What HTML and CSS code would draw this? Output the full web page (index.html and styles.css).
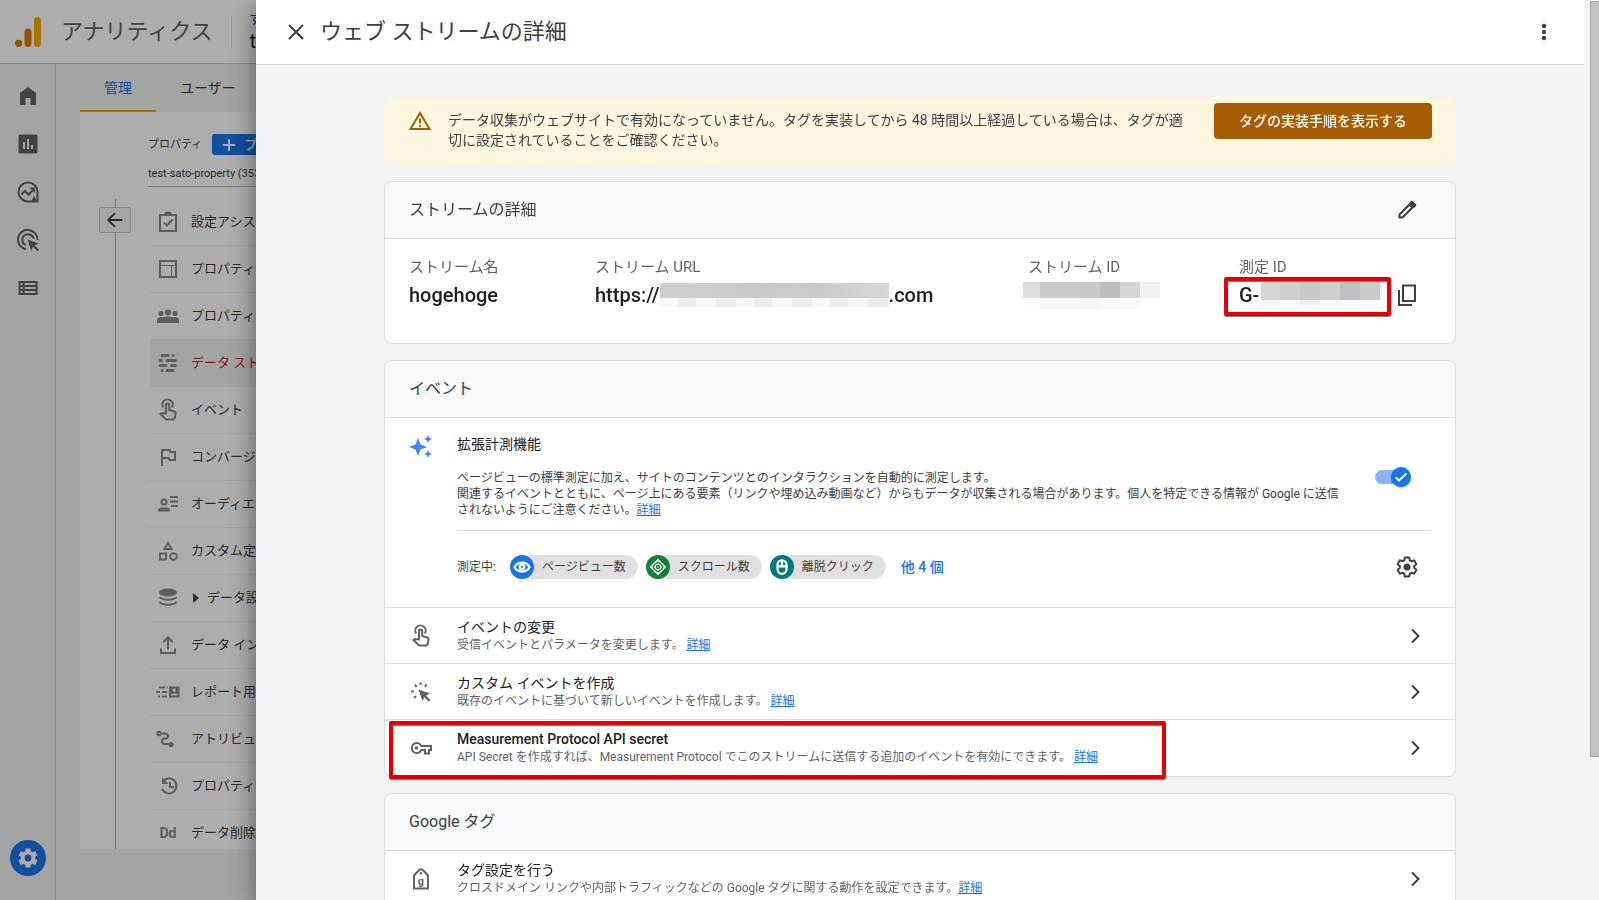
FILE: index.html
```html
<!DOCTYPE html>
<html lang="ja">
<head>
<meta charset="utf-8">
<title>アナリティクス | ウェブ ストリームの詳細</title>
<link rel="stylesheet" href="styles.css">
</head>
<body>
<div class="app">
  <header class="topbar">
    <svg class="logo" viewBox="0 0 26 30" width="26" height="30" aria-hidden="true"><rect x="19" y="0" width="7" height="30" rx="3.5" fill="#f9ab00"/><rect x="9.500" y="11.500" width="7" height="18.500" rx="3.500" fill="#e37400"/><circle cx="3.600" cy="26.300" r="3.600" fill="#e37400"/></svg>
    <span class="product">アナリティクス</span>
    <div class="account"><span class="account-all">す</span><span class="account-name">te</span></div>
  </header>
  <div class="workspace">
    <nav class="rail" aria-label="メイン">
      <a href="#" aria-label="ホーム"><svg viewBox="0 0 24 24"><path d="M12 3 4 9v12h5.500v-7h5v7H20V9z"/></svg></a>
      <a href="#" aria-label="レポート"><svg viewBox="0 0 24 24"><path d="M20 2.500H4c-.8 0-1.500.7-1.500 1.500v16c0 .8.7 1.500 1.500 1.500h16c.8 0 1.500-.7 1.500-1.500V4c0-.8-.7-1.500-1.500-1.500zM9 17H7v-7h2zm4 0h-2V7h2zm4 0h-2v-4h2z"/></svg></a>
      <a href="#" aria-label="探索"><svg viewBox="0 0 24 24"><path class="line" d="M12 2.500a9.500 9.500 0 1 0 0 19h9.500V12A9.500 9.500 0 0 0 12 2.500z"/><path class="line" d="m5.500 14.500 3.500-3.500 3.500 3.500 5-5"/><path d="M13.500 7.500H19V13zM18 16l4 6h-7z"/></svg></a>
      <a href="#" aria-label="広告"><svg viewBox="0 0 24 24"><path class="line" d="M10 21.300A9.800 9.800 0 1 1 21.500 12M9.500 17A5.700 5.700 0 1 1 17.500 10.500"/><path d="m11.500 11.500 11 4-4 1.800 4.500 4.500-1.500 1.500-4.500-4.500-1.800 4z"/></svg></a>
      <a href="#" aria-label="設定"><svg viewBox="0 0 24 24"><path d="M2.500 5h19v14h-19zM4.500 7v2h2V7zm4 0v2h11V7zm-4 4v2h2v-2zm4 0v2h11v-2zm-4 4v2h2v-2zm4 0v2h11v-2z" fill-rule="evenodd"/></svg></a>
      <a href="#" class="admin" aria-label="管理"><svg viewBox="0 0 24 24"><use href="#gear"/><circle cx="12" cy="12" r="3.400" fill="#1a73e8"/></svg></a>
    </nav>
    <main class="admin-page">
      <div class="tabs"><a href="#" class="tab current">管理</a><a href="#" class="tab">ユーザー</a></div>
      <div class="panel">
        <div class="spine"><button class="back" aria-label="戻る"><svg viewBox="0 0 24 24"><path class="line" d="M20 12H5M12 4.500 4.500 12l7.500 7.500"/></svg></button></div>
        <div class="property">
          <div class="property-head"><span>プロパティ</span><button class="create"><svg viewBox="0 0 14 14"><path d="M7 1v12M1 7h12"/></svg>プロ</button></div>
          <div class="property-name">test-sato-property (353</div>
          <ul class="menu">
            <li><svg viewBox="0 0 24 24"><path class="line" d="M4 5h16v16H4zM8 12.500l3 3 5.500-6"/><path d="M8 5a4 3.500 0 0 1 8 0z"/></svg>設定アシス</li>
            <li><svg viewBox="0 0 24 24"><path class="line" d="M4 4h16v16H4z"/><path class="thin" d="M4 8.500h16M15.500 8.500V20"/></svg>プロパティ</li>
            <li><svg viewBox="0 0 24 24"><circle cx="12" cy="8.500" r="3"/><circle cx="5" cy="9.500" r="2.500"/><circle cx="19" cy="9.500" r="2.500"/><path d="M1 19v-3c0-2 2-3 4-3 1 0 2 .3 2.500.6C9 12.700 10.500 12.500 12 12.500s3 .2 4.500 1.100c.5-.3 1.500-.6 2.500-.6 2 0 4 1 4 3v3z"/></svg>プロパティ</li>
            <li class="active"><svg viewBox="0 0 24 24"><path class="dash" d="M6 4.500h6M17 4.500h.2M4 9.500h1.500M11 9.500h8.500M4 14.500h6M15.500 14.500h4M6 19.500h.2M11 19.500h6"/></svg>データ スト</li>
            <li><svg viewBox="0 0 24 24"><use href="#touch"/></svg>イベント</li>
            <li><svg viewBox="0 0 24 24"><path class="line" d="M6 21V5h7.500l.7 2H19v8h-5.500l-.8-2H6"/></svg>コンバージ</li>
            <li><svg viewBox="0 0 24 24"><circle class="line" cx="8" cy="10" r="2.500"/><path class="line" d="M3 18.500c0-3 10-3 10 0z M14 5h8M14 9.500h8M15 14h7"/></svg>オーディエ</li>
            <li><svg viewBox="0 0 24 24"><path class="line" d="m12 4 3.500 6h-7zM4 14.500h6v6H4z"/><circle class="line" cx="17.500" cy="17.500" r="3.300"/></svg>カスタム定</li>
            <li><svg viewBox="0 0 24 24"><ellipse cx="12" cy="6.500" rx="9" ry="4"/><path class="line" d="M3.500 11c2 3.500 15 3.500 17 0M3.500 16c2 3.500 15 3.500 17 0"/></svg><i class="expand"></i>データ設</li>
            <li><svg viewBox="0 0 24 24"><path class="line" d="M5 15.500V20h14v-4.500M12 16V5M7.500 9 12 4.500 16.500 9"/></svg>データ イン</li>
            <li><svg viewBox="0 0 24 24"><path class="line" d="M3 7.500h6M10.500 7.500h1M0 12h4M6 12h5M2 16.500h2M6 16.500h5"/><path fill-rule="evenodd" d="M13 6.500h10.500v11H13zM18.200 8.500a1.700 1.700 0 1 0 .1 0zM15 15.500h6.500c0-3-6.500-3-6.500 0z"/></svg>レポート用</li>
            <li><svg viewBox="0 0 24 24"><circle class="line" cx="3" cy="6.500" r="1.700"/><path class="line" d="M5 6.500h4c4 0 4 5 0 5s-4 5.500 0 5.500h4"/><circle cx="15" cy="17.500" r="2.600"/></svg>アトリビュ</li>
            <li><svg viewBox="0 0 24 24"><path class="line" d="M6.500 8a7.500 7.500 0 1 1-.4 7M14 8v5h4"/><path d="M6 3.500V10h6.500z"/></svg>プロパティ</li>
            <li><b>Dd</b>データ削除</li>
          </ul>
        </div>
      </div>
    </main>
  </div>
</div>

<div class="scrim"></div>

<section class="drawer" aria-label="ウェブ ストリームの詳細">
  <header class="drawer-head">
    <button class="icon-button" aria-label="閉じる"><svg viewBox="0 0 24 24"><path class="line" d="m5 5 14 14M19 5 5 19"/></svg></button>
    <h1>ウェブ ストリームの詳細</h1>
    <button class="icon-button more" aria-label="その他"><svg viewBox="0 0 24 24"><circle cx="12" cy="6" r="2.200"/><circle cx="12" cy="12" r="2.200"/><circle cx="12" cy="18" r="2.200"/></svg></button>
  </header>
  <div class="drawer-body">
    <div class="banner" role="status">
      <svg viewBox="0 0 24 24"><path class="line" d="M12 4 2.500 20h19z"/><path d="M11 9.500h2v5h-2zM11 16h2v2h-2z"/></svg>
      <p>データ収集がウェブサイトで有効になっていません。タグを実装してから 48 時間以上経過している場合は、タグが適切に設定されていることをご確認ください。</p>
      <button>タグの実装手順を表示する</button>
    </div>

    <section class="card">
      <div class="card-head"><h2>ストリームの詳細</h2><button class="icon-button" aria-label="編集"><svg viewBox="0 0 24 24"><path class="line" d="m4.500 16.500 10-10 3 3-10 10h-3z"/><path d="m14 5 1.800-1.800c.6-.6 1.500-.6 2.100 0l2.900 2.900c.6.600.6 1.500 0 2.100L19 10z"/></svg></button></div>
      <dl class="facts">
        <div><dt>ストリーム名</dt><dd>hogehoge</dd></div>
        <div><dt>ストリーム URL</dt><dd>https://<span class="mask mask-url"></span>.com</dd></div>
        <div><dt>ストリーム ID</dt><dd><span class="mask mask-id"></span></dd></div>
        <div class="measure"><dt>測定 ID</dt><dd>G-<span class="mask mask-measure"></span><button class="icon-button" aria-label="コピー"><svg viewBox="0 0 24 24"><path class="line" d="M8 2.500h12v15.500H8zM4 7v15h13"/></svg></button></dd></div>
      </dl>
    </section>

    <section class="card">
      <div class="card-head"><h2>イベント</h2></div>
      <div class="enhanced">
        <svg class="sparkle" viewBox="0 0 24 24"><path d="m9 4 2.600 6.400L18 13l-6.400 2.600L9 22l-2.600-6.400L0 13l6.400-2.600zM19 1l1.200 2.800L23 5l-2.800 1.200L19 9l-1.200-2.800L15 5l2.800-1.200zM19 16l1.200 2.800L23 20l-2.800 1.200L19 24l-1.200-2.800L15 20l2.800-1.200z"/></svg>
        <div class="enhanced-main">
          <div class="enhanced-top">
            <div><h3 id="em">拡張計測機能</h3>
            <p>ページビューの標準測定に加え、サイトのコンテンツとのインタラクションを自動的に測定します。<br>関連するイベントとともに、ページ上にある要素（リンクや埋め込み動画など）からもデータが収集される場合があります。個人を特定できる情報が Google に送信<br>されないようにご注意ください。<a href="#">詳細</a></p></div>
            <label class="switch"><input type="checkbox" checked aria-labelledby="em"><span class="knob"><svg viewBox="0 0 24 24"><path d="m4 12.500 5 5L20 6.500"/></svg></span></label>
          </div>
          <div class="measuring">
            <span>測定中:</span>
            <span class="chip"><i class="blue"><svg viewBox="0 0 24 24"><path d="M2 12c4-8 16-8 20 0-4 8-16 8-20 0z"/><circle cx="12" cy="12" r="3"/></svg></i>ページビュー数</span>
            <span class="chip"><i class="green"><svg viewBox="0 0 24 24"><path d="m12 1 11 11-11 11L1 12z" fill="#fff" stroke="none"/><path class="cut" d="m8 8-2.500 4L8 16M16 8l2.500 4-2.500 4M8.500 8 12 5.500 15.500 8M8.500 16l3.500 2.500 3.500-2.500"/><circle cx="12" cy="12" r="2" class="cut"/></svg></i>スクロール数</span>
            <span class="chip"><i class="teal"><svg viewBox="0 0 24 24"><path d="M6 9a6 6 0 0 1 12 0v6a6 6 0 0 1-12 0zM6 11h12M12 3v8"/></svg></i>離脱クリック</span>
            <a href="#" class="others">他 4 個</a>
            <button class="icon-button" aria-label="設定"><svg viewBox="0 0 24 24"><g class="gear-line"><use href="#gear"/></g><circle cx="12" cy="12" r="3.500"/></svg></button>
          </div>
        </div>
      </div>
      <div class="row"><svg viewBox="0 0 24 24"><use href="#touch"/></svg><div><h3>イベントの変更</h3><p>受信イベントとパラメータを変更します。 <a href="#">詳細</a></p></div><button class="icon-button" aria-label="イベントの変更"><svg viewBox="0 0 24 24"><use href="#chevron"/></svg></button></div>
      <div class="row"><svg viewBox="0 0 24 24"><path class="line" d="M7.500 7 6 4.500M11.500 5V2.500M16 7l1.500-2.500M5 11.500H2M7 16l-2 2"/><path d="m9.500 9.500 11.500 4-4 2 4.500 4.500-1.700 1.700-4.500-4.500-1.800 3.800z"/></svg><div><h3>カスタム イベントを作成</h3><p>既存のイベントに基づいて新しいイベントを作成します。 <a href="#">詳細</a></p></div><button class="icon-button" aria-label="カスタム イベントを作成"><svg viewBox="0 0 24 24"><use href="#chevron"/></svg></button></div>
      <div class="row marked"><svg viewBox="0 0 24 24"><path class="line" d="M12.300 10h9.700v4h-2v3.500h-4V14h-3.700A5 5 0 1 1 12.300 10z"/><circle cx="7.500" cy="12" r="1.800"/></svg><div><h3>Measurement Protocol API secret</h3><p>API Secret を作成すれば、Measurement Protocol でこのストリームに送信する追加のイベントを有効にできます。 <a href="#">詳細</a></p></div><button class="icon-button" aria-label="Measurement Protocol API secret"><svg viewBox="0 0 24 24"><use href="#chevron"/></svg></button></div>
    </section>

    <section class="card">
      <div class="card-head"><h2>Google タグ</h2></div>
      <div class="row"><svg viewBox="0 0 24 24"><path class="line" d="M5 8.500 10.500 2.500h3L19 8.500v13H5z"/><circle cx="12" cy="6.300" r="1.200"/><text x="12" y="17.500" class="tag-letter">g</text></svg><div><h3>タグ設定を行う</h3><p>クロスドメイン リンクや内部トラフィックなどの Google タグに関する動作を設定できます。<a href="#">詳細</a></p></div><button class="icon-button" aria-label="タグ設定を行う"><svg viewBox="0 0 24 24"><use href="#chevron"/></svg></button></div>
    </section>
  </div>
  <div class="scrollbar"></div>
</section>

<svg class="defs" aria-hidden="true"><defs>
  <path id="gear" d="M19.140 12.940c.04-.3.06-.61.06-.94 0-.32-.02-.64-.07-.94l2.030-1.580c.18-.14.23-.41.12-.61l-1.920-3.320c-.12-.22-.37-.29-.59-.22l-2.390.96c-.5-.38-1.030-.7-1.620-.94l-.36-2.540c-.04-.24-.24-.41-.48-.41h-3.840c-.24 0-.43.17-.47.41l-.36 2.540c-.59.24-1.130.57-1.620.94l-2.390-.96c-.22-.08-.47 0-.59.22L2.740 8.870c-.12.21-.08.47.12.61l2.030 1.580c-.05.3-.09.63-.09.94s.02.64.07.94l-2.030 1.580c-.18.14-.23.41-.12.61l1.920 3.320c.12.22.37.29.59.22l2.390-.96c.5.38 1.030.7 1.620.94l.36 2.540c.05.24.24.41.48.41h3.840c.24 0 .44-.17.47-.41l.36-2.540c.59-.24 1.130-.56 1.620-.94l2.390.96c.22.08.47 0 .59-.22l1.920-3.320c.12-.22.07-.47-.12-.61z"/>
  <g id="touch"><path class="line" d="M7.200 9.500a5.200 5.200 0 1 1 8.600 0"/><path class="line" d="M10 15.500V7a1.600 1.600 0 0 1 3.200 0v5l5 1.500c1 .3 1.500 1 1.300 2l-.8 4.500c-.2 1-.8 1.500-1.700 1.500h-6c-.7 0-1.200-.2-1.700-.7L4.500 16l1.200-1z"/></g>
  <path id="chevron" class="line" d="m9 5.500 6.500 6.500L9 18.500"/>
</defs></svg>
</body>
</html>
```
FILE: styles.css
```css
*, *::before, *::after { box-sizing: border-box; }
body { margin: 0; font: 14px/20px Roboto, "Noto Sans CJK JP", sans-serif; color: #3c4043; background: #f1f3f4; }
h1, h2, h3, p, dl, dd, ul { margin: 0; padding: 0; font-weight: 400; }
h3 { font-size: 14px; }
button { font: inherit; border: 0; padding: 0; cursor: pointer; }
svg { width: 24px; height: 24px; flex: none; fill: currentColor; display: block; }
.line { fill: none; stroke: currentColor; stroke-width: 2; }
.thin { fill: none; stroke: currentColor; stroke-width: 1; }
.defs { position: absolute; width: 0; height: 0; }
.icon-button { display: flex; align-items: center; justify-content: center; width: 24px; height: 24px; flex: none; background: none; color: #3c4043; }

/* Page behind the drawer */
.app { height: 100vh; display: flex; flex-direction: column; overflow: hidden; }
.topbar { display: flex; align-items: center; height: 64px; flex: none; padding-left: 15px; background: #fff; border-bottom: 1px solid #c6c8ca; }
.logo { width: 26px; height: 30px; }
.product { margin-left: 20px; font-size: 22px; line-height: 32px; color: #5f6368; }
.account { display: flex; flex-direction: column; margin-left: 18px; padding-left: 18px; height: 32px; justify-content: center; border-left: 1px solid #dadce0; color: #202124; }
.account-all { font-size: 12px; line-height: 18px; }
.account-name { font-size: 20px; line-height: 24px; }
.workspace { flex: 1; display: flex; min-height: 0; }
.rail { width: 56px; flex: none; display: flex; flex-direction: column; align-items: center; gap: 24px; padding: 20px 0 24px; border-right: 1px solid #c6c8ca; color: #5f6368; }
.rail a { color: inherit; }
.rail .admin { margin-top: auto; padding: 6px; border-radius: 50%; background: #1a73e8; color: #fff; }
.admin-page { flex: 1; display: flex; flex-direction: column; padding: 0 0 51px 24px; min-width: 0; }
.tabs { display: flex; height: 48px; flex: none; }
.tab { padding: 14px 24px 12px; color: #3c4043; text-decoration: none; }
.tab.current { color: #1a73e8; border-bottom: 2px solid #ff9800; }
.panel { flex: 1; display: flex; min-height: 0; overflow: hidden; background: #fff; }
.spine { width: 68px; flex: none; padding: 95px 17px 0 19px; background: linear-gradient(#b0b0b0, #b0b0b0) 35px 87px / 1px 100% no-repeat; }
.back { display: flex; align-items: center; justify-content: center; width: 32px; height: 26px; background: #f5f5f5; border: 1px solid #ccc; border-radius: 2px; color: #3c4043; }
.back svg { width: 22px; height: 22px; }
.property { flex: 1; padding-top: 22px; }
.property-head { display: flex; align-items: center; gap: 10px; height: 21px; font-size: 11px; }
.create { display: flex; align-items: center; gap: 8px; height: 21px; padding: 0 10px; border-radius: 3px; background: #1a73e8; color: #fff; font-size: 13px; font-weight: 500; }
.create svg { width: 14px; height: 14px; stroke: #fff; stroke-width: 2; }
.property-name { margin-top: 9px; height: 23px; font-size: 11px; border-bottom: 1px solid #bdbdbd; }
.menu { list-style: none; margin: 12px 0 0 2px; font-size: 13px; }
.menu li { display: flex; align-items: center; gap: 11px; height: 47px; padding: 0 6px; border-bottom: 1px solid #f0f0f0; color: #3c4043; }
.menu svg { color: #8a8a8a; }
.menu b { width: 24px; text-align: center; font-size: 14px; color: #8a8a8a; }
.menu .active { background: #f1f3f4; color: #d01f1f; }
.menu .expand { border-left: 6px solid currentColor; border-top: 5px solid transparent; border-bottom: 5px solid transparent; margin: 0 -3px 0 2px; }
.dash { fill: none; stroke: currentColor; stroke-width: 3; stroke-linecap: round; }
.scrim { position: fixed; inset: 0; background: rgba(0, 0, 0, .32); }

/* Drawer */
.drawer { position: fixed; top: 0; right: 0; bottom: 0; left: 256px; display: flex; flex-direction: column; padding-right: 15px; overflow: hidden; background: #f1f3f4; box-shadow: 0 8px 24px rgba(0, 0, 0, .5); }
.drawer-head { display: flex; align-items: center; height: 65px; flex: none; padding: 0 28px; background: #fff; border-bottom: 1px solid #d2d5d8; }
.drawer-head h1 { margin-left: 12px; font-size: 22px; line-height: 32px; }
.drawer-head .more { margin-left: auto; }
.drawer-body { flex: 1; min-height: 0; overflow: hidden; display: flex; flex-direction: column; gap: 16px; padding: 32px 128px 0; }
.drawer-body > * { flex: none; }
.scrollbar { position: absolute; top: 1px; right: 0; width: 9px; height: 84%; background: #c1c2c4; border: 1px solid #a8abae; border-right: 0; }

.banner { display: flex; align-items: flex-start; min-height: 68px; padding: 6px 24px; border-radius: 8px; background: #fef7e0; }
.banner svg { margin-top: 6px; color: #a85c00; }
.banner p { flex: 1; margin: 7px 18px 0 16px; }
.banner button { width: 218px; height: 36px; flex: none; border-radius: 4px; background: #a85c00; color: #fff; font-weight: 500; }

.card { background: #fff; border: 1px solid #dadce0; border-radius: 8px; }
.card-head { display: flex; align-items: center; justify-content: space-between; height: 57px; padding: 0 36px 0 24px; background: #f8f9fa; border-bottom: 1px solid #dadce0; border-radius: 8px 8px 0 0; }
.card-head h2 { font-size: 16px; line-height: 24px; }

.facts { display: grid; grid-template-columns: 186fr 433fr 211fr 192fr; padding: 17px 24px 33px; }
.facts dt { font-size: 15px; line-height: 22px; color: #5f6368; }
.facts dd { display: flex; align-items: center; height: 30px; margin-top: 2px; font-size: 20px; font-weight: 500; line-height: 30px; color: #202124; }
.facts > div { position: relative; }
.measure .icon-button { margin-left: 12px; }
.measure::after, .row.marked::after { content: ""; position: absolute; border: 4px solid #e60000; border-radius: 2px; box-shadow: 0 1px 0 #808080, inset 0 1px 0 #808080; pointer-events: none; }
.measure::after { left: -15px; top: 21px; width: 167px; height: 39px; }
.mask { flex: none; height: 24px; }
.mask-url { width: 229px; background: linear-gradient(90deg, #cfcfcf, #cccbcb 40%, #cdcccb 60%, #c8cbd0 68%, #cdcdcd 75%, #d6d7d8) top / 100% 15px no-repeat, repeating-linear-gradient(90deg, #f8f8f8 0 18px, #eceded 18px 36px, #f6f6f6 36px 56px, #ebebeb 56px 76px) bottom / 100% 9px no-repeat; }
.mask-id { width: 137px; height: 27px; margin-left: -5px; background: linear-gradient(90deg, #dcdcdc 0 17px, #cbcac9 17px 57px, #c8cac9 57px 77px, #bdbdbf 77px 97px, #d5d5d5 97px 117px, #eff0f2 117px) top / 100% 16px no-repeat, linear-gradient(90deg, #fdfdfd 0 17px, #f6f6f6 17px 77px, #f9f9f9 77px 117px, #fff 117px) bottom / 100% 11px no-repeat; }
.mask-measure { width: 122px; margin-left: 2px; margin-top: -4px; background: linear-gradient(90deg, #d6d6d6 0 19px, #cfcfcf 19px 39px, #c8c9cb 39px 59px, #cfcfcf 59px 79px, #bfbfc1 79px 99px, #cacacb 99px 119px, #f1f1f3 119px) top / 100% 19px no-repeat, linear-gradient(90deg, #f5f5f5 0 19px, #fafafa 19px 39px, #efefef 39px 59px, #f9f9f9 59px) bottom / 100% 5px no-repeat; }

.enhanced { display: flex; gap: 24px; height: 190px; padding: 16px 24px 0; border-bottom: 1px solid #dadce0; }
.sparkle { color: #4285f4; }
.enhanced-main { flex: 1; min-width: 0; }
.enhanced-top { display: flex; justify-content: space-between; height: 97px; border-bottom: 1px solid #dadce0; }
.enhanced-top h3 { color: #202124; }
.enhanced-top p { margin-top: 16px; font-size: 12px; line-height: 16px; }
a { color: #1a73e8; }
.switch { position: relative; flex: none; width: 36px; height: 20px; margin: 33px 20px 0 0; }
.switch input { appearance: none; display: block; width: 32px; height: 14px; margin: 3px 0; border-radius: 7px; background: #8ab4f8; }
.knob { position: absolute; right: 0; top: 0; width: 20px; height: 20px; padding: 2px; border-radius: 50%; background: #1a73e8; box-shadow: 0 1px 2px rgba(0, 0, 0, .3); }
.knob svg { width: 16px; height: 16px; fill: none; stroke: #fff; stroke-width: 3; }
.measuring { display: flex; align-items: center; gap: 8px; height: 72px; padding-right: 12px; font-size: 12px; }
.measuring > :first-child { margin-right: 6px; }
.chip { display: flex; align-items: center; gap: 8px; height: 24px; padding-right: 12px; border-radius: 12px; background: #e0e0e0; }
.chip i { padding: 3px; border-radius: 50%; }
.chip svg { width: 18px; height: 18px; fill: none; stroke: #fff; stroke-width: 3; }
.chip .cut { stroke: #188038; stroke-width: 2; }
.blue { background: #1a73e8; }
.green { background: #188038; }
.teal { background: #00797e; }
.others { margin-left: 7px; font-size: 14px; font-weight: 500; text-decoration: none; }
.measuring .icon-button { margin-left: auto; }
.gear-line { fill: none; stroke: currentColor; stroke-width: 2; }

.row { position: relative; display: flex; align-items: center; gap: 24px; height: 56px; padding: 0 28px 0 24px; border-bottom: 1px solid #dadce0; }
.row:last-child { border-bottom: 0; }
.row > svg { color: #5f6368; }
.row > div { flex: 1; }
.row h3 { line-height: 18px; color: #202124; }
.row p { font-size: 12px; line-height: 18px; color: #5f6368; }
.row.marked h3 { font-weight: 500; }
.row.marked::after { left: 4px; top: 1px; width: 777px; height: 58px; }
.tag-letter { font: 700 11px Roboto, sans-serif; text-anchor: middle; }
```
